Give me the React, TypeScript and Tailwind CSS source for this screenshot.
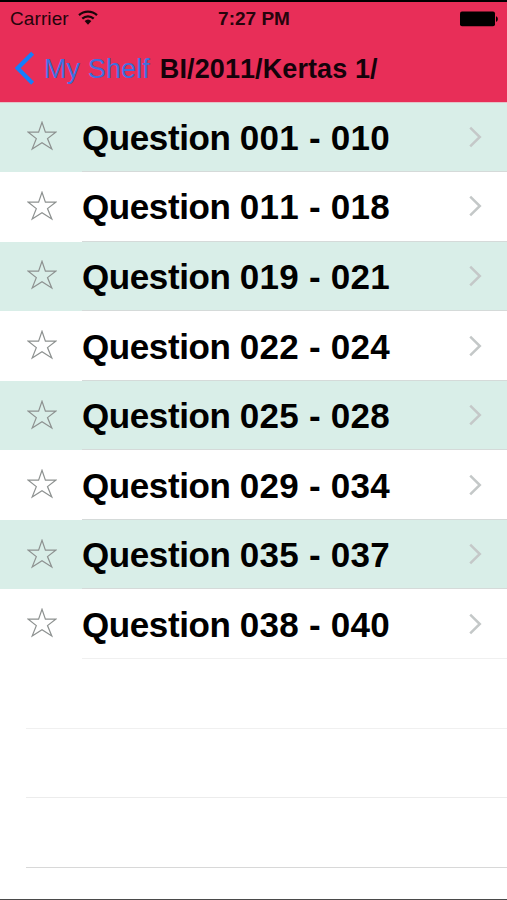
const questions = [
  "001 - 010",
  "011 - 018",
  "019 - 021",
  "022 - 024",
  "025 - 028",
  "029 - 034",
  "035 - 037",
  "038 - 040",
];

const emptyRows = ["border-[#f0f0f0]", "border-[#ececec]", "border-[#d8d8d8]"];

function WifiIcon() {
  return (
    <svg width="20" height="15" viewBox="0 0 20 15" className="mb-[3px] ml-[9px]">
      <g fill="none" stroke="#1a0509" strokeWidth="2.2">
        <path d="M1 5.1a13.2 13.2 0 0 1 18 0" />
        <path d="M4.3 8.6a8.3 8.3 0 0 1 11.4 0" />
      </g>
      <path d="M6.6 11.1a5 5 0 0 1 6.8 0L10 14.7z" fill="#1a0509" />
    </svg>
  );
}

function BatteryIcon() {
  return (
    <svg width="38" height="16" viewBox="0 0 38 16">
      <rect x="0" y="0.6" width="35" height="14.6" rx="2" fill="#000" />
      <path d="M36 5.2c2.4.6 2.4 5 0 5.6z" fill="#000" />
    </svg>
  );
}

function StarIcon() {
  return (
    <svg width="30" height="30" viewBox="0 0 30 30" className="ml-[27px]">
      <path
        d="M15 1.3l3.4 9.9h10.3l-8.2 6.4 4.3 10.3L15 21.7l-9.8 6.2 4.1-10.3L1.3 11.2h10.3z"
        fill="none"
        stroke="#8d9190"
        strokeWidth="1.2"
      />
    </svg>
  );
}

function Header() {
  return (
    <header className="h-[103px] shrink-0 border-t-2 border-b border-t-black border-b-[#e3c3c8] bg-[#e82e58]">
      <div className="grid h-8 grid-cols-3 items-center pr-[9px] pl-[10px] text-[19px] leading-8 text-[#26040c]">
        <div className="flex items-center">
          <span className="pt-px tracking-[0.1px]">Carrier</span>
          <WifiIcon />
        </div>
        <span className="text-center font-bold">7:27 PM</span>
        <div className="flex justify-end">
          <BatteryIcon />
        </div>
      </div>
      <div className="flex h-[68px] items-center pl-[15px] text-[27px] whitespace-nowrap [font-kerning:none]">
        <svg width="20" height="34" viewBox="0 0 20 34">
          <path
            d="M17.6 2.2L2.6 17.2l15 15"
            fill="none"
            stroke="#157efb"
            strokeWidth="4.2"
          />
        </svg>
        <span className="ml-[9px] pt-[2px] tracking-[0.1px] text-[#3e70df]">
          My Shelf
        </span>
        <h1 className="ml-[10px] pt-[2px] font-bold tracking-[0.1px] text-[#14020a]">
          BI/2011/Kertas 1/
        </h1>
      </div>
    </header>
  );
}

function QuestionRow({ range, shaded }: { range: string; shaded: boolean }) {
  return (
    <li
      className={`group flex h-[69.55px] items-stretch ${shaded ? "bg-[#d9eee8]" : "bg-white"}`}
    >
      <div className="flex w-[82px] shrink-0 items-center pb-[2px]">
        <StarIcon />
      </div>
      <div className="flex flex-1 items-center justify-between border-b border-[#d5dad9] pr-[25px] group-last:border-[#f0f0f0]">
        <span className="pt-px text-[35px] leading-none font-bold whitespace-nowrap [font-kerning:none]">
          <span className="tracking-[-0.4px]">Question </span>
          <span className="tracking-[0.25px]">{range}</span>
        </span>
        <svg width="13" height="22" viewBox="0 0 13 22">
          <path
            d="M1.2 1.6l9.6 9.4-9.6 9.4"
            fill="none"
            stroke="#c4c8c8"
            strokeWidth="2.5"
          />
        </svg>
      </div>
    </li>
  );
}

export default function App() {
  return (
    <main className="flex h-[900px] w-[507px] flex-col overflow-hidden border-b border-[#4a4a4a] bg-white font-['Liberation_Sans',Arial,sans-serif] text-black">
      <Header />
      <ul className="-mt-[0.4px]">
        {questions.map((range, i) => (
          <QuestionRow key={range} range={range} shaded={i % 2 === 0} />
        ))}
      </ul>
      <div className="pt-[0.4px] pl-[26px]">
        {emptyRows.map((border) => (
          <div key={border} className={`h-[69.55px] border-b ${border}`} />
        ))}
      </div>
    </main>
  );
}
